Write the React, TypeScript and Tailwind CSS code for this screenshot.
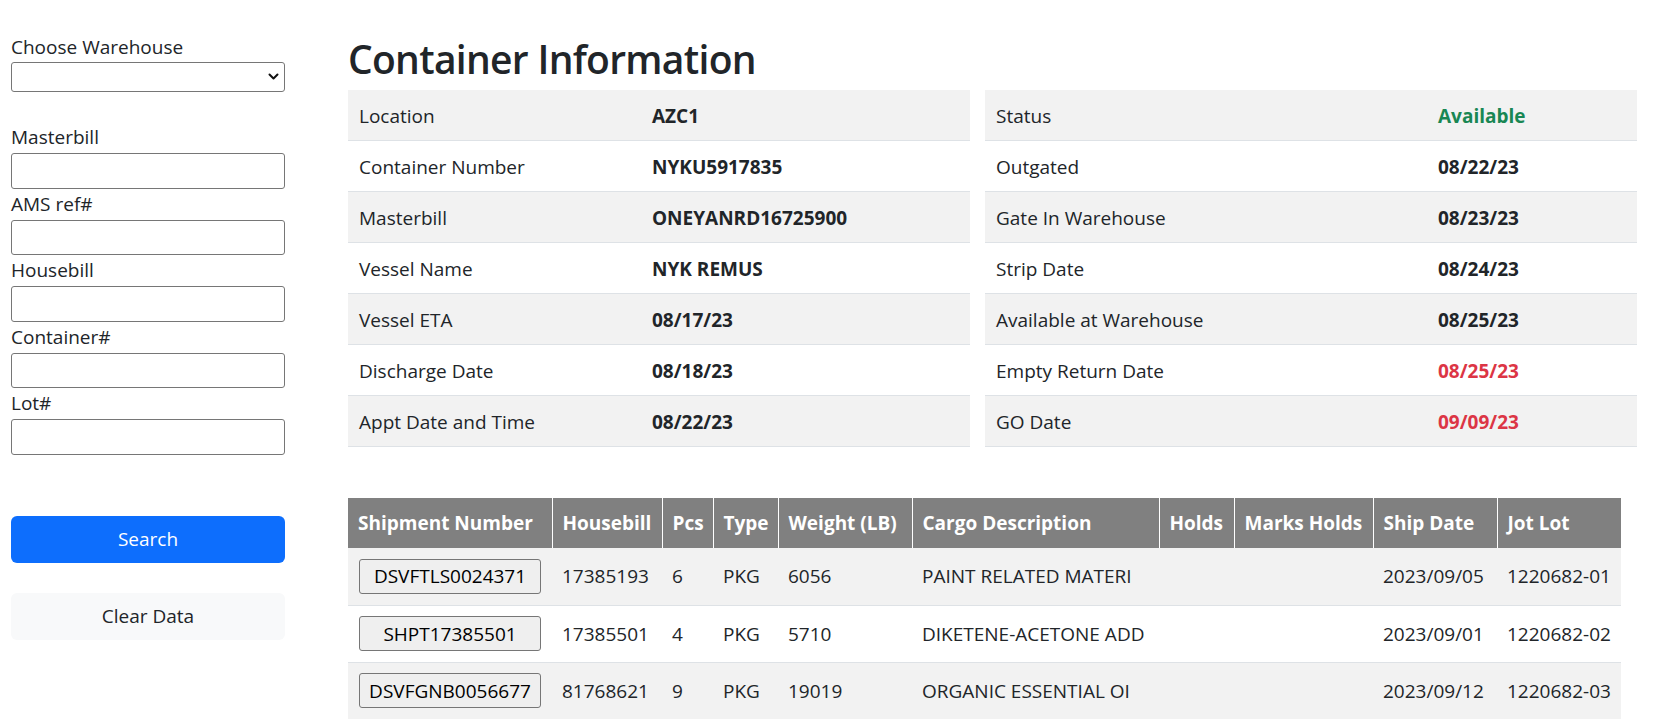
import { ChangeEvent, useState } from 'react';

const leftInfo = [
  { label: 'Location', value: 'AZC1' },
  { label: 'Container Number', value: 'NYKU5917835' },
  { label: 'Masterbill', value: 'ONEYANRD16725900' },
  { label: 'Vessel Name', value: 'NYK REMUS' },
  { label: 'Vessel ETA', value: '08/17/23' },
  { label: 'Discharge Date', value: '08/18/23' },
  { label: 'Appt Date and Time', value: '08/22/23' },
];

const rightInfo = [
  { label: 'Status', value: 'Available', color: 'text-[#198754]' },
  { label: 'Outgated', value: '08/22/23' },
  { label: 'Gate In Warehouse', value: '08/23/23' },
  { label: 'Strip Date', value: '08/24/23' },
  { label: 'Available at Warehouse', value: '08/25/23' },
  { label: 'Empty Return Date', value: '08/25/23', color: 'text-[#dc3545]' },
  { label: 'GO Date', value: '09/09/23', color: 'text-[#dc3545]' },
];

const columns = [
  { name: 'Shipment Number', width: 'w-[204px]' },
  { name: 'Housebill', width: 'w-[110px]' },
  { name: 'Pcs', width: 'w-[51px]' },
  { name: 'Type', width: 'w-[65px]' },
  { name: 'Weight (LB)', width: 'w-[134px]' },
  { name: 'Cargo Description', width: 'w-[247px]' },
  { name: 'Holds', width: 'w-[75px]' },
  { name: 'Marks Holds', width: 'w-[139px]' },
  { name: 'Ship Date', width: 'w-[124px]' },
  { name: 'Jot Lot', width: 'w-[124px]' },
];

const shipments = [
  { shipment: 'DSVFTLS0024371', housebill: '17385193', pcs: 6, type: 'PKG', weight: 6056, cargo: 'PAINT RELATED MATERI', holds: '', marks: '', shipDate: '2023/09/05', lot: '1220682-01' },
  { shipment: 'SHPT17385501', housebill: '17385501', pcs: 4, type: 'PKG', weight: 5710, cargo: 'DIKETENE-ACETONE ADD', holds: '', marks: '', shipDate: '2023/09/01', lot: '1220682-02' },
  { shipment: 'DSVFGNB0056677', housebill: '81768621', pcs: 9, type: 'PKG', weight: 19019, cargo: 'ORGANIC ESSENTIAL OI', holds: '', marks: '', shipDate: '2023/09/12', lot: '1220682-03' },
];

const searchFields = ['Masterbill', 'AMS ref#', 'Housebill', 'Container#', 'Lot#'];

function InfoTable({ rows, width, labelWidth }: { rows: any[]; width: string; labelWidth: string }) {
  return (
    <div className={width}>
      {rows.map((row, i) => (
        <div
          key={row.label}
          className={`flex h-[51px] items-center border-b border-[#dee2e6] pt-[2px] ${i % 2 == 0 ? 'bg-[#f2f2f2]' : 'bg-white'}`}
        >
          <div className={`${labelWidth} shrink-0 pl-[11px]`}>{row.label}</div>
          <div className={`pl-[11px] font-bold ${row.color || 'text-[#212529]'}`}>{row.value}</div>
        </div>
      ))}
    </div>
  );
}

export default function App() {
  const [fields, setFields] = useState<Record<string, string>>({});
  const [warehouse, setWarehouse] = useState('');

  const update = (name: string) => (e: ChangeEvent<HTMLInputElement>) => {
    setFields({ ...fields, [name]: e.target.value });
  };

  return (
    <div className="flex h-[719px] overflow-hidden bg-white text-[19px] leading-[30px] text-[#212529] font-['Open_Sans',sans-serif]">
      <aside className="ml-[11px] w-[274px] shrink-0 pt-[32px]">
        <label className="block leading-[30px]">Choose Warehouse</label>
        <div className="relative">
          <select
            value={warehouse}
            onChange={(e) => setWarehouse(e.target.value)}
            className="block h-[30px] w-full appearance-none rounded-[3px] border border-[#767676] bg-white px-1"
          >
            <option value=""></option>
            <option value="AZC1">AZC1</option>
          </select>
          <svg
            className="pointer-events-none absolute right-[6px] top-[11px]"
            width="11"
            height="8"
            viewBox="0 0 11 8"
            fill="none"
          >
            <path d="M1.5 1.5 L5.5 5.5 L9.5 1.5" stroke="#111" strokeWidth="2" strokeLinecap="round" strokeLinejoin="round" />
          </svg>
        </div>

        <div className="mt-[30px]">
          {searchFields.map((name) => (
            <div key={name}>
              <label className="block leading-[31px]">{name}</label>
              <input
                value={fields[name] || ''}
                onChange={update(name)}
                className="block h-[35.5px] w-full rounded-[3px] border border-[#767676] bg-white px-1"
              />
            </div>
          ))}
        </div>

        <button className="mt-[61px] block h-[47px] w-full rounded-[6px] bg-[#0d6efd] text-white">Search</button>
        <button
          onClick={() => { setFields({}); setWarehouse('') }}
          className="mt-[30px] block h-[47px] w-full rounded-[6px] bg-[#f8f9fa] text-[#212529]"
        >
          Clear Data
        </button>
      </aside>

      <main className="ml-[63px] pt-[20px]">
        <h1 className="mb-[1px] mt-[9px] h-[60px] text-[39px] font-semibold leading-[60px] tracking-[-0.7px]">Container Information</h1>

        <div className="flex gap-[15px]">
          <InfoTable rows={leftInfo} width="w-[622px]" labelWidth="w-[293px]" />
          <InfoTable rows={rightInfo} width="w-[652px]" labelWidth="w-[442px]" />
        </div>

        <table className="mt-[51px] w-[1273px] table-fixed border-collapse">
          <colgroup>
            {columns.map((c) => (
              <col key={c.name} className={c.width} />
            ))}
          </colgroup>
          <thead>
            <tr className="h-[50px] bg-[#808080] text-white">
              {columns.map((c, i) => (
                <th
                  key={c.name}
                  className={`whitespace-nowrap px-[10px] text-left font-bold ${i < columns.length - 1 ? 'border-r border-white' : ''}`}
                >
                  {c.name}
                </th>
              ))}
            </tr>
          </thead>
          <tbody>
            {shipments.map((s, i) => (
              <tr key={s.shipment} className={`h-[57px] border-b border-[#dee2e6] ${i % 2 == 0 ? 'bg-[#f2f2f2]' : 'bg-white'}`}>
                <td className="px-[11px] align-middle">
                  <button className="h-[35px] w-[182px] whitespace-nowrap rounded-[3px] border border-[#767676] bg-[#efefef] text-black">
                    {s.shipment}
                  </button>
                </td>
                <td className="whitespace-nowrap px-[10px]">{s.housebill}</td>
                <td className="whitespace-nowrap px-[10px]">{s.pcs}</td>
                <td className="whitespace-nowrap px-[10px]">{s.type}</td>
                <td className="whitespace-nowrap px-[10px]">{s.weight}</td>
                <td className="whitespace-nowrap px-[10px]">{s.cargo}</td>
                <td className="whitespace-nowrap px-[10px]">{s.holds}</td>
                <td className="whitespace-nowrap px-[10px]">{s.marks}</td>
                <td className="whitespace-nowrap px-[10px]">{s.shipDate}</td>
                <td className="whitespace-nowrap px-[10px]">{s.lot}</td>
              </tr>
            ))}
          </tbody>
        </table>
      </main>
    </div>
  );
}
